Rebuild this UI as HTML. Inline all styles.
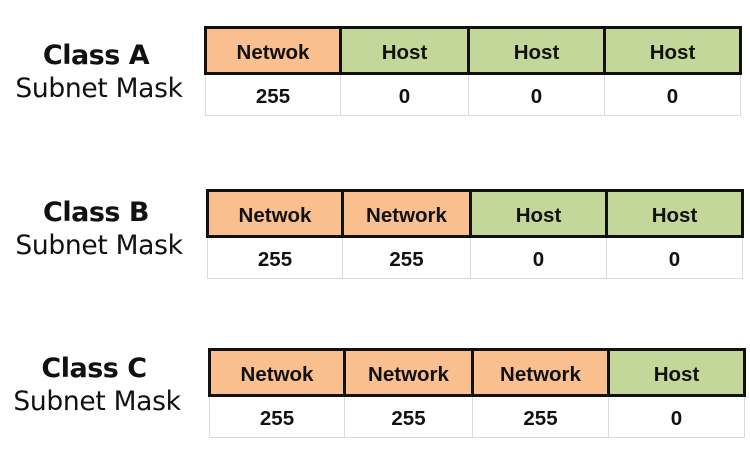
<!DOCTYPE html>
<html><head><style>
body{margin:0;width:750px;height:459px;background:#fff;position:relative;overflow:hidden;font-family:"Liberation Sans",sans-serif}
.lbl{position:absolute;width:200px;text-align:center;color:#111}
.c{font-family:"DejaVu Sans",sans-serif;font-weight:bold;font-size:27px;letter-spacing:-0.5px}
.s{font-family:"DejaVu Sans",sans-serif;font-size:26.5px;letter-spacing:-0.3px}
table{position:absolute;border-collapse:collapse;table-layout:fixed}
td{text-align:center;font-weight:bold;font-size:20.5px;color:#111;padding:0}
tr.h td{border:3px solid #111;height:38px;padding-top:5px}
tr.v td{border:1px solid #d3dbe8;height:37px;padding-top:3px}
.o{background:#f9bf8f}.g{background:#c4d79b}
</style></head><body>
<div class="lbl c" style="left:-4px;top:40px">Class A</div>
<div class="lbl s" style="left:-1px;top:73px">Subnet Mask</div>
<div class="lbl c" style="left:-4px;top:197px">Class B</div>
<div class="lbl s" style="left:-1px;top:230px">Subnet Mask</div>
<div class="lbl c" style="left:-6px;top:353px">Class C</div>
<div class="lbl s" style="left:-3px;top:386px">Subnet Mask</div>

<table style="left:204px;top:26px;width:535px">
<colgroup><col style="width:135px"><col style="width:128px"><col style="width:136px"><col style="width:136px"></colgroup>
<tr class="h"><td class="o">Netwok</td><td class="g">Host</td><td class="g">Host</td><td class="g">Host</td></tr>
<tr class="v"><td>255</td><td>0</td><td>0</td><td>0</td></tr>
</table>
<table style="left:206px;top:189px;width:535px">
<colgroup><col style="width:135px"><col style="width:128px"><col style="width:136px"><col style="width:136px"></colgroup>
<tr class="h"><td class="o">Netwok</td><td class="o">Network</td><td class="g">Host</td><td class="g">Host</td></tr>
<tr class="v"><td>255</td><td>255</td><td>0</td><td>0</td></tr>
</table>
<table style="left:208px;top:348px;width:535px">
<colgroup><col style="width:135px"><col style="width:128px"><col style="width:136px"><col style="width:136px"></colgroup>
<tr class="h"><td class="o">Netwok</td><td class="o">Network</td><td class="o">Network</td><td class="g">Host</td></tr>
<tr class="v"><td>255</td><td>255</td><td>255</td><td>0</td></tr>
</table>
</body></html>
